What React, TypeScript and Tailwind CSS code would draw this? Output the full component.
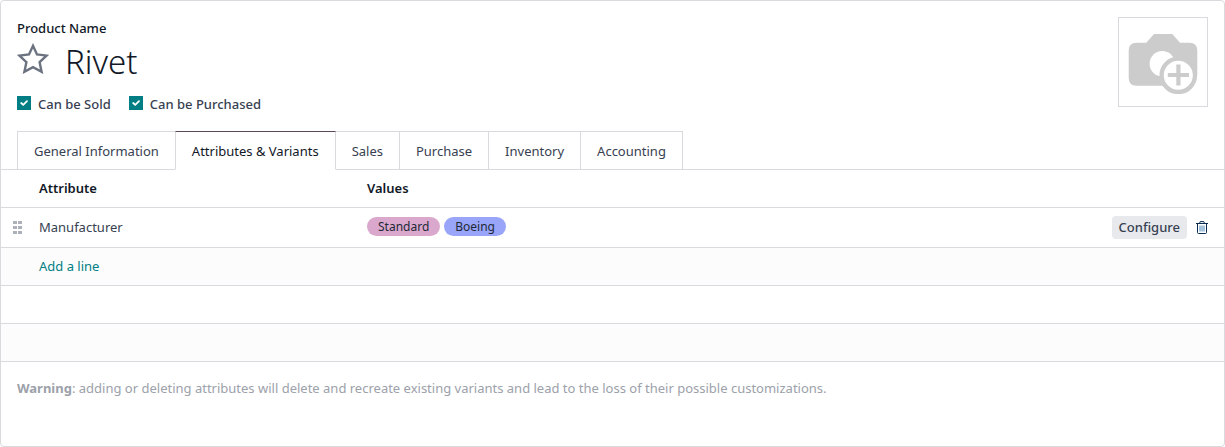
import { useState } from "react";

type Attribute = {
  id: number;
  name: string;
  values: { label: string; color: string }[];
};

const TABS = [
  "General Information",
  "Attributes & Variants",
  "Sales",
  "Purchase",
  "Inventory",
  "Accounting",
];

const ATTRIBUTES: Attribute[] = [
  {
    id: 1,
    name: "Manufacturer",
    values: [
      { label: "Standard", color: "bg-[#d9a8cc]" },
      { label: "Boeing", color: "bg-[#98a5f9]" },
    ],
  },
];

function StarIcon() {
  return (
    <svg viewBox="0 0 32 31" className="h-[31px] w-8" fill="none" stroke="#6b7280" strokeWidth="2.4">
      <path d="M16 2.8 L20 11.4 L29.6 12.6 L22.6 19.2 L24.6 28.8 L16 24.2 L7.4 28.8 L9.4 19.2 L2.4 12.6 L12 11.4 Z" />
    </svg>
  );
}

function CameraIcon() {
  return (
    <svg viewBox="0 0 70 64" className="h-16 w-[70px]">
      <path
        fill="#cccccc"
        d="M8.500 12.700H18.300L26 4H44.300L52 12.700H61.500Q69.300 12.700 69.300 20.500V45H60V55.700H8.500Q.7 55.700 .7 48V20.500Q.7 12.700 8.500 12.700Z"
      />
      <circle cx="34.300" cy="33.700" r="12.700" fill="#fff" />
      <circle cx="50.300" cy="45.300" r="16.700" fill="#fff" stroke="#cccccc" strokeWidth="4.300" />
      <path stroke="#cccccc" strokeWidth="4.200" d="M39.800 45H61M50.400 34.400V55.600" />
    </svg>
  );
}

function TrashIcon() {
  return (
    <svg viewBox="0 0 12 13" className="h-[13px] w-3" fill="none" stroke="#0b2c52">
      <path d="M0 2.500H12M3.500 2.500L4.200 .6H7.800L8.500 2.500M1.500 3V11.500Q1.500 12.500 2.500 12.500H9.500Q10.500 12.500 10.500 11.500V3" />
      <path d="M4 4.500V10.500M6 4.500V10.500M8 4.500V10.500" stroke="#4b86b8" />
    </svg>
  );
}

function HandleIcon() {
  return (
    <svg viewBox="0 0 9 13" className="h-[13px] w-[9px]" fill="#adb1b9">
      <path d="M0 0h4v3H0zM5 0h4v3H5zM0 5h4v3H0zM5 5h4v3H5zM0 10h4v3H0zM5 10h4v3H5z" />
    </svg>
  );
}

function CheckField({ id, label }: { id: string; label: string }) {
  const [checked, setChecked] = useState(true);

  return (
    <div className="flex gap-[7px]">
      <span className="relative mt-[2px] size-[14px]">
        <input
          id={id}
          type="checkbox"
          checked={checked}
          onChange={(e) => setChecked(e.target.checked)}
          className="block size-[14px] appearance-none border border-[#017e84] checked:bg-[#017e84]"
        />
        {checked && (
          <svg viewBox="0 0 14 14" className="pointer-events-none absolute inset-0" fill="none" stroke="#fff" strokeWidth="1.800">
            <path d="M4.200 7L6.200 8.800L10 5.200" strokeLinecap="round" strokeLinejoin="round" />
          </svg>
        )}
      </span>
      <label htmlFor={id} className="font-medium">{label}</label>
    </div>
  );
}

export default function App() {
  const [name, setName] = useState("Rivet");
  const [tab, setTab] = useState("Attributes & Variants");
  const [favorite, setFavorite] = useState(false);

  return (
    <main className="min-h-screen rounded border border-[#d8dadd] bg-white pb-10 font-['Noto_Sans','Open_Sans',sans-serif] text-[13px] leading-5 text-[#374151]">
      <header className="flex justify-between gap-4 px-4 pt-4">
        <div className="min-w-0 flex-1">
          <label htmlFor="product-name" className="block pt-px font-medium text-[#111827]">
            Product Name
          </label>
          <div className="flex h-12 items-center gap-4">
            <button
              type="button"
              aria-label="Favorite"
              aria-pressed={favorite}
              onClick={() => setFavorite(!favorite)}
              className="pb-2"
            >
              <StarIcon />
            </button>
            <input
              id="product-name"
              value={name}
              onChange={(e) => setName(e.target.value)}
              className="min-w-0 flex-1 bg-transparent pb-px text-[33px] leading-10 font-light text-[#111827] outline-none"
            />
          </div>
          <div className="flex gap-[18px] pt-2">
            <CheckField id="sale-ok" label="Can be Sold" />
            <CheckField id="purchase-ok" label="Can be Purchased" />
          </div>
        </div>
        <button
          type="button"
          aria-label="Product image"
          className="flex size-[90px] items-center justify-center border border-[#d8dadd]"
        >
          <CameraIcon />
        </button>
      </header>

      <div role="tablist" className="mt-[17px] flex border-b border-[#d8dadd] pl-4">
        {TABS.map((t) => (
          <button
            key={t}
            type="button"
            role="tab"
            aria-selected={t === tab}
            onClick={() => setTab(t)}
            className={`-mb-px -mr-px h-[39px] border px-4 ${
              t === tab
                ? "z-10 border-x-[#d8dadd] border-t-[#5c4a5c] border-b-white text-[#111827]"
                : "border-[#d8dadd]"
            }`}
          >
            {t}
          </button>
        ))}
      </div>

      <table className="w-full table-fixed">
        <colgroup>
          <col className="w-[38px]" />
          <col className="w-[328px]" />
          <col />
          <col className="w-32" />
        </colgroup>
        <thead>
          <tr className="h-[37px] border-b border-[#d8dadd] text-left text-[#111827]">
            <th></th>
            <th className="font-semibold">Attribute</th>
            <th className="font-semibold">Values</th>
            <th></th>
          </tr>
        </thead>
        <tbody>
          {ATTRIBUTES.map((a) => (
            <tr key={a.id} className="h-10 border-b border-[#d8dadd]">
              <td className="pl-3"><HandleIcon /></td>
              <td>{a.name}</td>
              <td>
                <div className="flex gap-1 pb-px">
                  {a.values.map((v) => (
                    <span key={v.label} className={`rounded-full px-[11px] text-xs text-[#1f2937] ${v.color}`}>
                      <span className="block h-[19px] overflow-hidden leading-5">{v.label}</span>
                    </span>
                  ))}
                </div>
              </td>
              <td className="pr-4">
                <div className="flex items-center justify-end gap-[9px]">
                  <button type="button" className="h-[23px] rounded bg-[#e7e9ed] px-[7px] font-medium">
                    Configure
                  </button>
                  <button type="button" aria-label="Delete"><TrashIcon /></button>
                </div>
              </td>
            </tr>
          ))}
          <tr className="h-[38px] border-b border-[#d8dadd] bg-[#fcfcfc]">
            <td></td>
            <td colSpan={3}>
              <a href="#" className="text-[#017e84]">Add a line</a>
            </td>
          </tr>
          <tr className="h-[38px] border-b border-[#d8dadd]"><td colSpan={4}></td></tr>
          <tr className="h-[38px] border-b border-[#d8dadd] bg-[#fcfcfc]"><td colSpan={4}></td></tr>
        </tbody>
      </table>

      <p className="px-4 pt-4 text-[#9ca1aa]">
        <strong className="font-bold">Warning</strong>: adding or deleting attributes will delete and recreate
        existing variants and lead to the loss of their possible customizations.
      </p>
    </main>
  );
}
